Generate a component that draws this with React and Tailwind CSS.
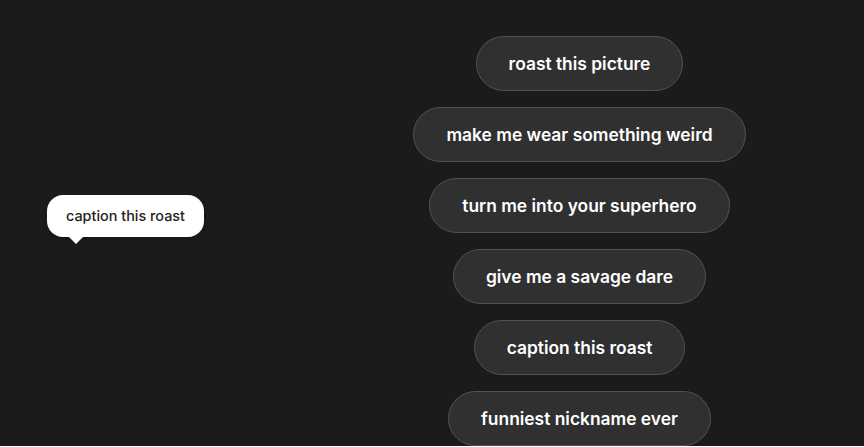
import React from 'react';

const prompts = [
  'roast this picture',
  'make me wear something weird',
  'turn me into your superhero',
  'give me a savage dare',
  'caption this roast',
  'funniest nickname ever',
];

const App = () => {
  return (
    <div className="relative h-[446px] w-full overflow-hidden bg-[#1b1b1b] font-[Inter]">
      <div className="flex h-full">
        {/* Left side, tooltip lives here */}
        <div className="relative w-[295px] shrink-0">
          <div className="absolute left-[47px] top-[195px]">
            <div className="rounded-[16px] bg-white px-[19px] py-[11px] text-[14.4px] font-medium leading-[20px] text-[#222] shadow-md">
              caption this roast
            </div>
            <div className="ml-[22px] h-0 w-0 border-x-[7px] border-t-[7px] border-x-transparent border-t-white" />
          </div>
        </div>

        {/* Prompt pills */}
        <div className="flex flex-1 flex-col items-center gap-4 pt-[36px]">
          {prompts.map((p) => (
            <button
              key={p}
              className="rounded-full border border-[#525252] bg-[#303030] px-8 py-3 text-[17.4px] font-semibold leading-[29px] text-white whitespace-nowrap"
            >
              {p}
            </button>
          ))}
        </div>
      </div>
    </div>
  );
};

export default App;
